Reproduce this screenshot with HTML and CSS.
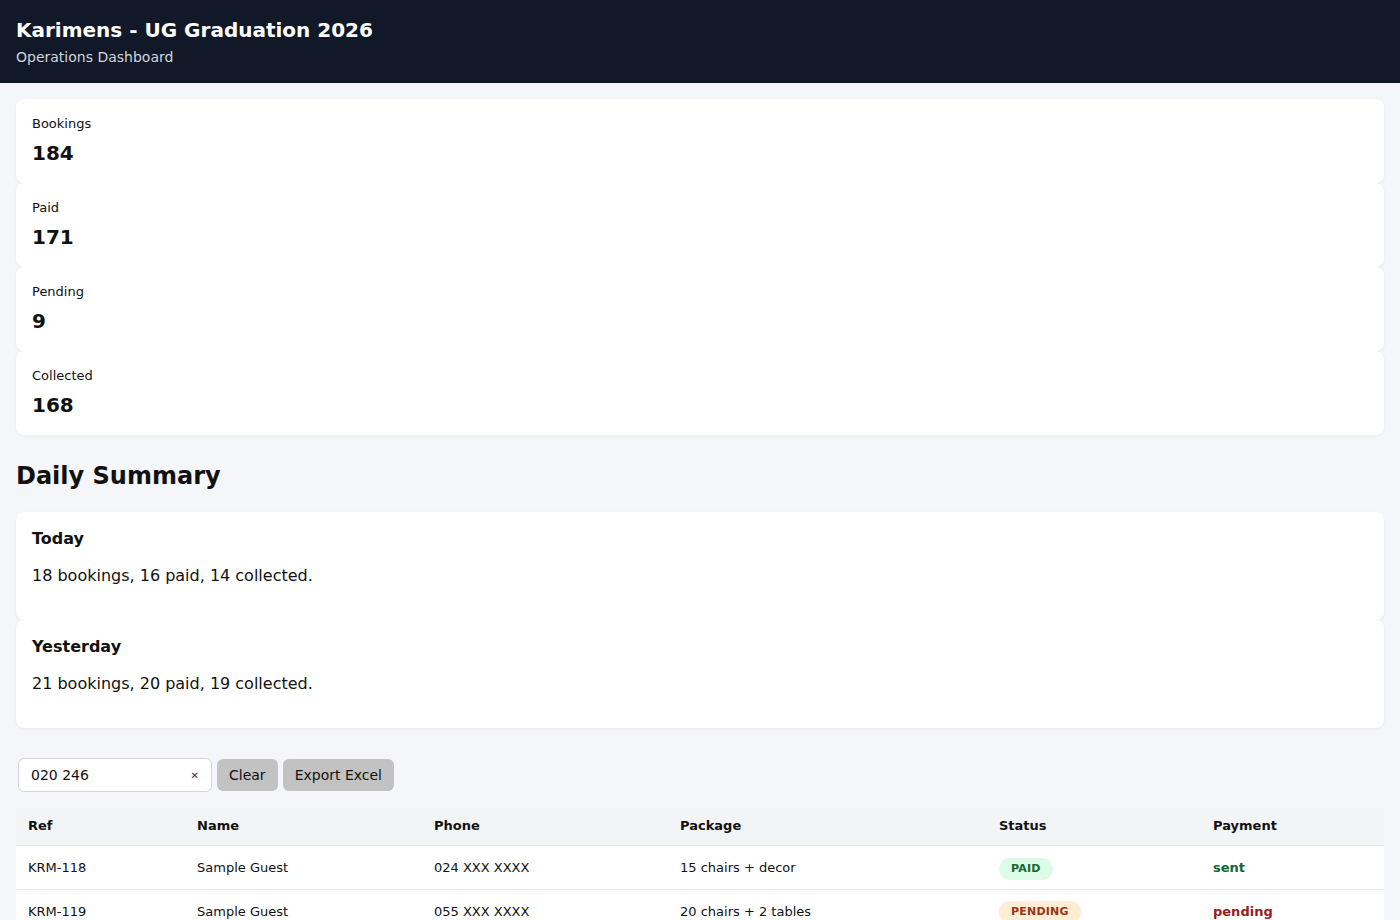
FILE: index.html
```html
<!DOCTYPE html>
<html lang="en">
<head>
    <meta charset="UTF-8">
    <meta name="viewport" content="width=device-width, initial-scale=1.0">
    <title>Karimens - Operations Dashboard</title>
    <link rel="stylesheet" href="styles.css">
</head>
<body>
    <header class="topbar">
        <h1>Karimens - UG Graduation 2026</h1>
        <p class="subtitle">Operations Dashboard</p>
    </header>

    <main class="content">
        <section class="stats">
            <div class="card stat">
                <div class="stat-label">Bookings</div>
                <div class="stat-value">184</div>
            </div>
            <div class="card stat">
                <div class="stat-label">Paid</div>
                <div class="stat-value">171</div>
            </div>
            <div class="card stat">
                <div class="stat-label">Pending</div>
                <div class="stat-value">9</div>
            </div>
            <div class="card stat">
                <div class="stat-label">Collected</div>
                <div class="stat-value">168</div>
            </div>
        </section>

        <h2 class="section-title">Daily Summary</h2>
        <section class="summary">
            <div class="card day">
                <h3>Today</h3>
                <p>18 bookings, 16 paid, 14 collected.</p>
            </div>
            <div class="card day">
                <h3>Yesterday</h3>
                <p>21 bookings, 20 paid, 19 collected.</p>
            </div>
        </section>

        <div class="toolbar">
            <div class="search">
                <input type="text" id="search" value="020 246">
                <span class="search-clear">&#x2715;</span>
            </div>
            <button type="button">Clear</button>
            <button type="button">Export Excel</button>
        </div>

        <table class="bookings">
            <thead>
                <tr>
                    <th class="col-ref">Ref</th>
                    <th class="col-name">Name</th>
                    <th class="col-phone">Phone</th>
                    <th class="col-package">Package</th>
                    <th class="col-status">Status</th>
                    <th class="col-payment">Payment</th>
                </tr>
            </thead>
            <tbody>
                <tr>
                    <td>KRM-118</td>
                    <td>Sample Guest</td>
                    <td>024 XXX XXXX</td>
                    <td>15 chairs + decor</td>
                    <td><span class="badge badge-paid">PAID</span></td>
                    <td class="pay-sent">sent</td>
                </tr>
                <tr>
                    <td>KRM-119</td>
                    <td>Sample Guest</td>
                    <td>055 XXX XXXX</td>
                    <td>20 chairs + 2 tables</td>
                    <td><span class="badge badge-pending">PENDING</span></td>
                    <td class="pay-pending">pending</td>
                </tr>
            </tbody>
        </table>
    </main>
</body>
</html>
```

FILE: styles.css
```css
body {
    font-family: "DejaVu Sans", sans-serif;
    margin: 0;
    background-color: #f5f6fa;
    color: #111;
}

.topbar {
    background-color: #111827;
    color: #fff;
    padding: 16px;
}

.topbar h1 {
    margin: 0;
    font-size: 20px;
    line-height: 28px;
}

.subtitle {
    margin: 3px 0 0;
    font-size: 14px;
    line-height: 20px;
    color: #d1d5db;
}

.content {
    padding: 16px;
}

.card {
    background-color: #fff;
    border-radius: 8px;
    padding: 16px;
    box-shadow: 0 1px 3px rgba(0, 0, 0, 0.06);
}

.stat-label {
    font-size: 13px;
    line-height: 17px;
}

.stat-value {
    margin-top: 7px;
    font-size: 20px;
    line-height: 28px;
    font-weight: bold;
}

.section-title {
    margin: 25px 0 20px;
    font-size: 24px;
    line-height: 32px;
}

.day h3 {
    margin: 0;
    font-size: 16px;
    line-height: 21px;
}

.day p {
    margin: 15px 0 16px;
    font-size: 16px;
    line-height: 24px;
}

.toolbar {
    display: flex;
    align-items: center;
    gap: 5px;
    margin-top: 30px;
    padding-left: 2px;
}

.search {
    display: flex;
    align-items: center;
    width: 194px;
    height: 34px;
    box-sizing: border-box;
    padding: 0 12px;
    background-color: #fff;
    border: 1px solid #d1d5db;
    border-radius: 6px;
}

.search input {
    flex: 1;
    min-width: 0;
    border: none;
    outline: none;
    padding: 0;
    font-family: inherit;
    font-size: 14px;
    color: #111;
    background: transparent;
}

.search-clear {
    font-size: 10px;
    font-weight: bold;
    color: #333;
}

.toolbar button {
    height: 32px;
    padding: 0 12px;
    font-family: inherit;
    font-size: 14px;
    color: #111;
    background-color: #c2c2c2;
    border: none;
    border-radius: 6px;
}

.bookings {
    width: 100%;
    margin-top: 16px;
    border-collapse: collapse;
    background-color: #fff;
    font-size: 13px;
}

.bookings th {
    text-align: left;
    padding: 10px 12px 12px;
    line-height: 15px;
    background-color: #f3f4f6;
    border-bottom: 1px solid #e5e7eb;
}

.bookings td {
    padding: 11px 12px 9px;
    line-height: 22px;
    border-bottom: 1px solid #e5e7eb;
}

.col-ref { width: 145px; }
.col-name { width: 213px; }
.col-phone { width: 222px; }
.col-package { width: 295px; }
.col-status { width: 190px; }

.badge {
    display: inline-block;
    padding: 4px 12px;
    border-radius: 999px;
    font-size: 11px;
    line-height: 14px;
    font-weight: bold;
    letter-spacing: 0.2px;
    vertical-align: middle;
}

.badge-paid {
    background-color: #dcfce7;
    color: #166534;
}

.badge-pending {
    background-color: #ffedd5;
    color: #9a3412;
}

.pay-sent {
    color: #166534;
    font-weight: bold;
}

.pay-pending {
    color: #991b1b;
    font-weight: bold;
}
```
